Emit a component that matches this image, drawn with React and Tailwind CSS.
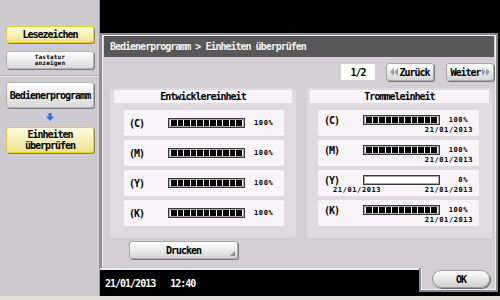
import React from "react";

const segs = Array.from({ length: 11 });

// pixel-ish label font used across the panel
const t = "text-[10px] font-bold tracking-[-1px]";
const small = "text-[7px] font-bold tracking-[0.6px]";

function Bar({ full = true }) {
  return (
    <div className="w-[77px] h-[10px] border border-[#3a3a3a] bg-[#a9a9a9] p-[1px] shrink-0">
      {full ? (
        <div className="h-full flex gap-[1px] bg-white px-[1px]">
          {segs.map((_, i) => (
            <div key={i} className="flex-1 bg-black" />
          ))}
        </div>
      ) : (
        <div className="h-full bg-white" />
      )}
    </div>
  );
}

function DevRow({ label }) {
  return (
    <div className="h-[26px] bg-[#f7f3f7] rounded-[2px] flex items-center pl-[5px]">
      <span className={`w-[39px] ${t}`}>{label}</span>
      <Bar />
      <span className={`ml-[9px] ${small}`}>100%</span>
    </div>
  );
}

function DrumRow({ label, pct = "100%", full = true, start }) {
  return (
    <div className="h-[26px] bg-[#f7f3f7] rounded-[2px] flex flex-col pl-[6px] pr-[6px] pt-[4px]">
      <div className="flex items-center h-[12px]">
        <span className={`w-[39px] ${t}`}>{label}</span>
        <Bar full={full} />
        <span className={`w-[28px] text-right ${small}`}>{pct}</span>
      </div>
      <div className={`flex justify-between leading-[8px] pl-[9px] ${small}`}>
        <span>{start || ""}</span>
        <span>21/01/2013</span>
      </div>
    </div>
  );
}

function SideButton({ yellow, className = "", children }) {
  const look = yellow
    ? "bg-linear-to-b from-[#fffbe2] to-[#f1e28a] border-[#e9d11c] shadow-[1px_1px_0_#8d8450]"
    : "bg-linear-to-b from-white to-[#dadada] border-[#b4b4b4] shadow-[1px_1px_0_#7e7e7e]";
  return (
    <div
      className={`mx-[6px] w-[88px] rounded-[3px] border flex flex-col items-center justify-center text-center font-bold ${look} ${className}`}
    >
      {children}
    </div>
  );
}

function DoubleArrow({ dir }) {
  return (
    <svg width="8" height="8" viewBox="0 0 8 8" className="shrink-0">
      {dir === "left" ? (
        <g fill="#9ea3b3">
          <polygon points="4,0 4,8 0,4" />
          <polygon points="8,0 8,8 4,4" />
        </g>
      ) : (
        <g fill="#9ea3b3">
          <polygon points="0,0 0,8 4,4" />
          <polygon points="4,0 4,8 8,4" />
        </g>
      )}
    </svg>
  );
}

const btn =
  "bg-linear-to-b from-white to-[#d6d6d6] border border-[#a7a7a7] rounded-[3px] shadow-[1px_1px_0_#7a7a7a]";

export default function App() {
  return (
    <div className="w-[500px] h-[300px] flex flex-col overflow-hidden font-['DejaVu_Sans_Mono',monospace] text-black">
      <div className="h-[296px] flex">
        {/* sidebar */}
        <div className="w-[100px] bg-[#cdcbcf] border-r border-[#9b999d] flex flex-col">
          <div className="h-[26px]" />
          <SideButton yellow className={`h-[17px] ${t}`}>
            Lesezeichen
          </SideButton>
          <SideButton className="h-[18px] mt-[8px] text-[6px] leading-[6px] tracking-[0.2px]">
            <span>Tastatur</span>
            <span>anzeigen</span>
          </SideButton>
          <div className="mt-[6px] h-[2px] border-t border-[#b3b1b5] bg-[#e4e2e6]" />
          <SideButton className={`h-[26px] mt-[5px] ${t}`}>Bedienerprogramm</SideButton>
          <div className="flex justify-center mt-[5px] h-[8px]">
            <svg width="8" height="8" viewBox="0 0 8 8">
              <rect x="2.5" y="0" width="3" height="4" fill="#2f6fe0" />
              <polygon points="0,3.5 8,3.5 4,8" fill="#2f6fe0" />
            </svg>
          </div>
          <SideButton yellow className={`h-[26px] mt-[6px] leading-[11px] ${t}`}>
            <span>Einheiten</span>
            <span>überprüfen</span>
          </SideButton>
        </div>

        {/* main */}
        <div className="w-[400px] bg-black flex flex-col">
          <div className="h-[33px]" />
          <div className="h-[235px] mr-[2px] bg-[#d1cfd2] border-[2px] border-b-0 border-[#8c8a8e] shadow-[inset_1px_1px_0_#f3f2f4,inset_-1px_0_0_#f3f2f4] flex flex-col">
            <div className={`mx-[2px] mt-[1px] h-[21px] bg-[#585858] text-[#f2f2f2] flex items-center pl-[6px] ${t}`}>
              Bedienerprogramm &gt; Einheiten überprüfen
            </div>
            <div className={`h-[18px] mt-[6px] flex items-center justify-end pr-[2px] ${t}`}>
              <div className="w-[34px] h-[16px] bg-white flex items-center justify-center">1/2</div>
              <div className={`${btn} ml-[11px] w-[48px] h-[18px] flex items-center justify-center gap-[1px]`}>
                <DoubleArrow dir="left" />
                <span>Zurück</span>
              </div>
              <div className={`${btn} ml-[12px] w-[48px] h-[18px] flex items-center justify-center gap-[1px]`}>
                <span>Weiter</span>
                <DoubleArrow dir="right" />
              </div>
            </div>
            <div className="flex mt-[7px] pl-[8px] gap-[11px]">
              <div className="w-[186px] h-[150px] bg-[#dddbde] rounded-[3px] pt-[2px] px-[4px]">
                <div className={`h-[13px] bg-[#f7f3f7] flex items-center justify-center ${t}`}>
                  Entwicklereinheit
                </div>
                <div className="flex flex-col gap-[4px] mt-[7px] ml-[10px] mr-[8px]">
                  <DevRow label="(C)" />
                  <DevRow label="(M)" />
                  <DevRow label="(Y)" />
                  <DevRow label="(K)" />
                </div>
              </div>
              <div className="w-[185px] h-[150px] bg-[#dddbde] rounded-[3px] pt-[2px] px-[3px]">
                <div className={`h-[13px] bg-[#f7f3f7] flex items-center justify-center ${t}`}>
                  Trommeleinheit
                </div>
                <div className="flex flex-col gap-[4px] mt-[7px] ml-[8px] mr-[10px]">
                  <DrumRow label="(C)" />
                  <DrumRow label="(M)" />
                  <DrumRow label="(Y)" pct="0%" full={false} start="21/01/2013" />
                  <DrumRow label="(K)" />
                </div>
              </div>
            </div>
            <div className="mt-[3px] ml-[27px]">
              <div className={`${btn} relative w-[109px] h-[18px] flex items-center justify-center ${t}`}>
                Drucken
                <svg width="5" height="5" viewBox="0 0 5 5" className="absolute right-[2px] bottom-[2px]">
                  <polygon points="5,0 5,5 0,5" fill="#8a8a8a" />
                </svg>
              </div>
            </div>
          </div>
          <div className="h-[28px] flex">
            <div className={`flex-1 border-t-[2px] border-[#eceaed] flex items-center pl-[5px] text-white gap-[15px] ${t}`}>
              <span>21/01/2013</span>
              <span>12:40</span>
            </div>
            <div className="w-[79px] h-[24px] mr-[2px] bg-[#d1cfd2] border-[2px] border-t-0 border-[#8c8a8e] shadow-[inset_1px_0_0_#f3f2f4,inset_-1px_-1px_0_#f3f2f4] flex items-center justify-end pr-[6px]">
              <div className={`w-[58px] h-[18px] rounded-full bg-linear-to-b from-white to-[#cfcfcf] border border-[#9a9a9a] shadow-[1px_1px_0_#6e6e6e] flex items-center justify-center ${t}`}>
                OK
              </div>
            </div>
          </div>
        </div>
      </div>
      <div className="h-[4px] bg-[#e3dfd9]" />
    </div>
  );
}
